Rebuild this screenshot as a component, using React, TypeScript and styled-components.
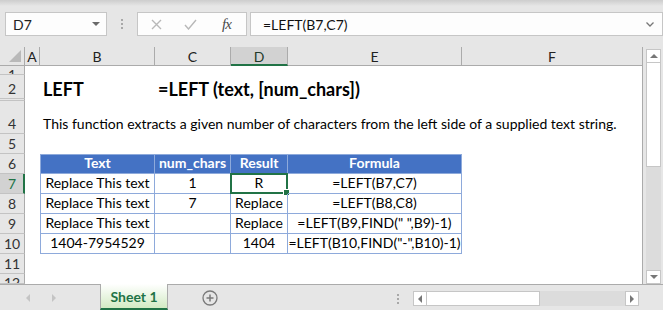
import React from 'react'
import styled, { createGlobalStyle, css } from 'styled-components'

const GlobalStyle = createGlobalStyle`
  html, body {
    margin: 0;
    padding: 0;
    background: #e6e6e6;
  }
  body {
    font-family: Lato, "Liberation Sans", sans-serif;
  }
`

const GREEN = '#217346'
const HEAD_BG = '#e6e6e6'
const LINE = '#ababab'
const TABLE_LINE = '#8eaadb'

export const Window = styled.div`
  width: 663px;
  height: 310px;
  display: flex;
  flex-direction: column;
  background: ${HEAD_BG};
  overflow: hidden;
`

/* ---------- formula bar ---------- */

export const FormulaBar = styled.div`
  height: 47px;
  display: flex;
  align-items: flex-start;
  padding-top: 12px;
  box-sizing: border-box;
  background: linear-gradient(#cdcdcd, #e6e6e6 6px);
`

export const NameBox = styled.div`
  margin-left: 5px;
  width: 102px;
  height: 24px;
  box-sizing: border-box;
  border: 1px solid #c6c6c6;
  background: #fdfdfd;
  display: flex;
  align-items: center;
  justify-content: space-between;
  padding: 0 6px 0 7px;
  font-size: 14px;
  color: #222;
`

export const Grip = styled.div`
  width: 30px;
  height: 24px;
  display: flex;
  flex-direction: column;
  align-items: center;
  justify-content: center;
  gap: 2px;

  span {
    width: 2px;
    height: 2px;
    background: #a8a8a8;
  }
`

export const FxBox = styled.div`
  width: 110px;
  height: 24px;
  box-sizing: border-box;
  border: 1px solid #c6c6c6;
  background: #fdfdfd;
  display: flex;
  align-items: center;
  padding-left: 13px;
  gap: 22px;
`

export const FxLabel = styled.span`
  margin-left: 3px;
  font-family: "Liberation Serif", serif;
  font-style: italic;
  font-size: 15px;
  color: #4a4a4a;
  letter-spacing: -1px;
`

export const FormulaInput = styled.div`
  margin-left: 3px;
  width: 413px;
  height: 24px;
  box-sizing: border-box;
  border: 1px solid #c6c6c6;
  background: #fdfdfd;
  display: flex;
  align-items: center;
  justify-content: space-between;
  padding: 0 8px 0 12px;
  font-size: 14px;
  color: #111;
`

/* ---------- sheet ---------- */

export const SheetArea = styled.div`
  height: 237px;
  display: flex;
`

export const Grid = styled.div`
  width: 643px;
  height: 237px;
  display: grid;
  grid-template-columns: 25px 15px 115px 76px 57px 174px 181px;
  grid-template-rows: 19px 9px 24px 2px 33px 20px 20px 20px 20px 20px 20px 20px 10px;
  background: #fff;
  overflow: hidden;
  box-sizing: border-box;
  border-right: 1px solid ${LINE};
`

export const Corner = styled.div`
  background: ${HEAD_BG};
  border-right: 1px solid ${LINE};
  border-bottom: 1px solid ${LINE};
  box-sizing: border-box;
  display: flex;
  align-items: flex-end;
  justify-content: flex-end;
  padding: 0 3px 3px 0;
`

export const ColHead = styled.div<{ $active?: boolean }>`
  background: ${p => (p.$active ? '#d2d2d2' : HEAD_BG)};
  border-right: 1px solid ${LINE};
  border-bottom: ${p => (p.$active ? `2px solid ${GREEN}` : `1px solid ${LINE}`)};
  box-sizing: border-box;
  display: flex;
  align-items: center;
  justify-content: center;
  font-size: 14px;
  color: ${p => (p.$active ? '#1f3a2a' : '#222')};
  padding-top: 1px;
`

export const RowHead = styled.div<{ $active?: boolean; $top?: boolean }>`
  background: ${p => (p.$active ? '#d2d2d2' : HEAD_BG)};
  border-right: ${p => (p.$active ? `2px solid ${GREEN}` : `1px solid ${LINE}`)};
  border-bottom: 1px solid #c3c3c3;
  box-sizing: border-box;
  display: flex;
  align-items: ${p => (p.$top ? 'flex-start' : 'flex-end')};
  justify-content: center;
  overflow: hidden;
  font-size: 14px;
  line-height: 18px;
  color: ${p => (p.$active ? GREEN : '#333')};
  padding-left: ${p => (p.$active ? '1px' : '0')};

  ${p =>
    p.$top &&
    css`
      span {
        display: block;
        line-height: 8px;
        padding-top: 5px;
      }
    `}
`

export const Cell = styled.div<{ $center?: boolean; $bold?: boolean; $size?: number }>`
  position: relative;
  display: flex;
  align-items: flex-end;
  justify-content: ${p => (p.$center ? 'center' : 'flex-start')};
  padding: 0 3px 1px;
  min-width: 0;
  white-space: nowrap;
  font-size: ${p => p.$size ?? 14}px;
  font-weight: ${p => (p.$bold ? 700 : 400)};
  line-height: 18px;
  color: #000;
  box-sizing: border-box;
`

export const TableCell = styled(Cell)<{ $head?: boolean; $first?: boolean }>`
  justify-content: center;
  border-right: 1px solid ${TABLE_LINE};
  border-bottom: 1px solid ${TABLE_LINE};
  border-left: ${p => (p.$first ? `1px solid ${TABLE_LINE}` : 'none')};
  border-top: ${p => (p.$head ? `1px solid ${TABLE_LINE}` : 'none')};
  ${p =>
    p.$head &&
    css`
      background: #4472c4;
      color: #fff;
      font-weight: 700;
    `}
`

export const Selection = styled.div`
  position: absolute;
  inset: -1px -1px -1px -1px;
  border: 2px solid ${GREEN};
  pointer-events: none;

  &::after {
    content: '';
    position: absolute;
    right: -4px;
    bottom: -4px;
    width: 5px;
    height: 5px;
    background: ${GREEN};
    border: 1px solid #fff;
  }
`

/* ---------- vertical scroll ---------- */

export const VScroll = styled.div`
  width: 20px;
  padding: 2px 2px 0 3px;
  box-sizing: border-box;
  display: flex;
  flex-direction: column;
`

export const ScrollButton = styled.div<{ $w?: number; $h?: number }>`
  width: ${p => p.$w ?? 15}px;
  height: ${p => p.$h ?? 14}px;
  box-sizing: border-box;
  border: 1px solid #c6c6c6;
  background: #fff;
  display: flex;
  align-items: center;
  justify-content: center;
  flex: none;
`

export const VThumb = styled.div`
  width: 15px;
  height: 104px;
  box-sizing: border-box;
  border: 1px solid #c6c6c6;
  border-top: none;
  background: #fff;
`

export const VTrack = styled.div`
  width: 15px;
  flex: 1;
  background: #dcdcdc;
`

/* ---------- tab bar ---------- */

export const TabBar = styled.div`
  height: 26px;
  display: flex;
  align-items: stretch;
  border-top: 1px solid ${LINE};
  box-sizing: border-box;
  background: ${HEAD_BG};
`

export const TabNav = styled.div`
  width: 100px;
  display: flex;
  align-items: center;
  padding-left: 26px;
  gap: 22px;
  box-sizing: border-box;
`

export const SheetTab = styled.div`
  width: 68px;
  margin-top: -1px;
  box-sizing: border-box;
  border-left: 1px solid ${LINE};
  border-right: 1px solid ${LINE};
  border-bottom: 2px solid ${GREEN};
  background: linear-gradient(#ffffff, #d3ebc4);
  display: flex;
  align-items: center;
  justify-content: center;
  font-size: 14px;
  font-weight: 700;
  color: ${GREEN};
`

export const AddSheet = styled.div`
  margin-left: 34px;
  display: flex;
  align-items: center;
`

export const HScroll = styled.div`
  margin-left: 10px;
  margin-top: 6px;
  display: flex;
  height: 15px;
`

export const HThumb = styled.div`
  width: 113px;
  box-sizing: border-box;
  border: 1px solid #c6c6c6;
  border-left: none;
  background: #fff;
`

export const HTrack = styled.div`
  width: 85px;
  background: #dcdcdc;
`

export const HGrip = styled(Grip)`
  width: 10px;
  height: 15px;
  margin-left: 175px;
  margin-top: 6px;
`

/* ---------- data ---------- */

const COLUMNS = ['A', 'B', 'C', 'D', 'E', 'F']

const TABLE_HEAD = ['Text', 'num_chars', 'Result', 'Formula']

const TABLE_ROWS = [
  ['Replace This text', '1', 'R', '=LEFT(B7,C7)'],
  ['Replace This text', '7', 'Replace', '=LEFT(B8,C8)'],
  ['Replace This text', '', 'Replace', '=LEFT(B9,FIND(" ",B9)-1)'],
  ['1404-7954529', '', '1404', '=LEFT(B10,FIND("-",B10)-1)'],
]

function Triangle({ dir, color = '#777', size = 4 }: { dir: 'up' | 'down' | 'left' | 'right'; color?: string; size?: number }) {
  const s = size
  const points = {
    up: `0,${s} ${s},0 ${2 * s},${s}`,
    down: `0,0 ${2 * s},0 ${s},${s}`,
    left: `${s},0 ${s},${2 * s} 0,${s}`,
    right: `0,0 0,${2 * s} ${s},${s}`,
  }[dir]
  const vertical = dir === 'up' || dir === 'down'
  return (
    <svg width={vertical ? 2 * s : s} height={vertical ? s : 2 * s}>
      <polygon points={points} fill={color} />
    </svg>
  )
}

function EmptyRow({ n, top }: { n: number; top?: boolean }) {
  return (
    <>
      <RowHead $top={top}>
        <span>{n === 3 ? '' : n}</span>
      </RowHead>
      {COLUMNS.map(c => (
        <Cell key={c} />
      ))}
    </>
  )
}

function TableRow({ n, values, head }: { n: number; values: string[]; head?: boolean }) {
  return (
    <>
      <RowHead $active={n === 7}>
        <span>{n}</span>
      </RowHead>
      <Cell />
      {values.map((v, i) => (
        <TableCell key={i} $head={head} $first={i === 0}>
          {v}
          {n === 7 && i === 2 && <Selection />}
        </TableCell>
      ))}
      <Cell />
    </>
  )
}

export default function App() {
  return (
    <Window>
      <GlobalStyle />

      <FormulaBar>
        <NameBox>
          <span>D7</span>
          <Triangle dir="down" color="#6a6a6a" size={4} />
        </NameBox>
        <Grip>
          <span />
          <span />
          <span />
        </Grip>
        <FxBox>
          <svg width="11" height="11">
            <path d="M1 1 L10 10 M10 1 L1 10" stroke="#b8b8b8" strokeWidth="1.4" />
          </svg>
          <svg width="13" height="11">
            <path d="M1 6 L4.5 10 L12 1" stroke="#b8b8b8" strokeWidth="1.4" fill="none" />
          </svg>
          <FxLabel>fx</FxLabel>
        </FxBox>
        <FormulaInput>
          <span>=LEFT(B7,C7)</span>
          <svg width="8" height="5">
            <path d="M0.5 0.5 L4 4 L7.5 0.5" stroke="#777" strokeWidth="1.3" fill="none" />
          </svg>
        </FormulaInput>
      </FormulaBar>

      <SheetArea>
        <Grid>
          <Corner>
            <svg width="12" height="12">
              <polygon points="12,0 12,12 0,12" fill="#b9b9b9" />
            </svg>
          </Corner>
          {COLUMNS.map(c => (
            <ColHead key={c} $active={c === 'D'}>
              {c}
            </ColHead>
          ))}

          <EmptyRow n={1} top />

          <RowHead>
            <span>2</span>
          </RowHead>
          <Cell />
          <Cell $bold $size={18}>
            LEFT
          </Cell>
          <Cell $bold $size={18}>
            =LEFT (text, [num_chars])
          </Cell>
          <Cell />
          <Cell />
          <Cell />

          <EmptyRow n={3} />

          <RowHead>
            <span>4</span>
          </RowHead>
          <Cell />
          <Cell>This function extracts a given number of characters from the left side of a supplied text string.</Cell>
          <Cell />
          <Cell />
          <Cell />
          <Cell />

          <EmptyRow n={5} />

          <TableRow n={6} values={TABLE_HEAD} head />
          {TABLE_ROWS.map((r, i) => (
            <TableRow key={i} n={7 + i} values={r} />
          ))}

          <EmptyRow n={11} />
          <EmptyRow n={12} top />
        </Grid>

        <VScroll>
          <ScrollButton>
            <Triangle dir="up" color="#777" size={4} />
          </ScrollButton>
          <VThumb />
          <VTrack />
          <ScrollButton>
            <Triangle dir="down" color="#777" size={4} />
          </ScrollButton>
        </VScroll>
      </SheetArea>

      <TabBar>
        <TabNav>
          <Triangle dir="left" color="#c4c4c4" size={4} />
          <Triangle dir="right" color="#c4c4c4" size={4} />
        </TabNav>
        <SheetTab>Sheet 1</SheetTab>
        <AddSheet>
          <svg width="16" height="16">
            <circle cx="8" cy="8" r="7" stroke="#7a7a7a" strokeWidth="1.3" fill="none" />
            <path d="M8 4.5 V11.5 M4.5 8 H11.5" stroke="#7a7a7a" strokeWidth="1.5" />
          </svg>
        </AddSheet>
        <HGrip>
          <span />
          <span />
          <span />
        </HGrip>
        <HScroll>
          <ScrollButton $w={14} $h={15}>
            <Triangle dir="left" color="#777" size={4} />
          </ScrollButton>
          <HThumb />
          <HTrack />
          <ScrollButton $w={14} $h={15}>
            <Triangle dir="right" color="#777" size={4} />
          </ScrollButton>
        </HScroll>
      </TabBar>
    </Window>
  )
}
